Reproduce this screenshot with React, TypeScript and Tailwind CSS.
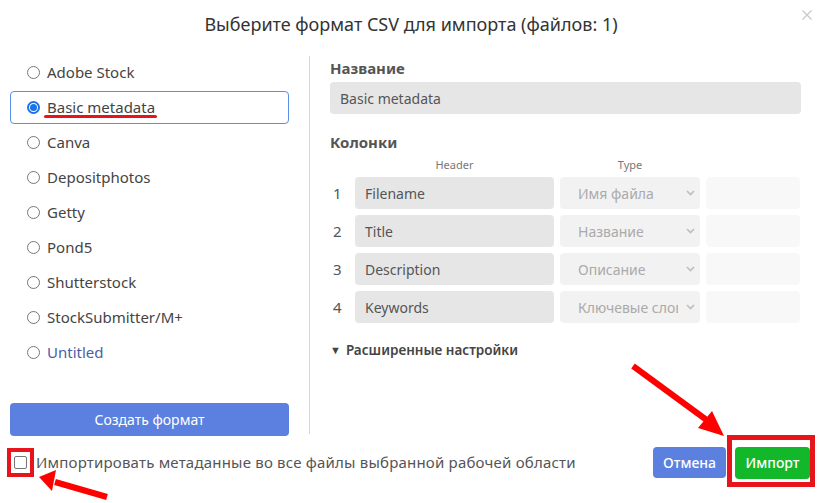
import React from 'react';

const formats = [
  'Adobe Stock',
  'Basic metadata',
  'Canva',
  'Depositphotos',
  'Getty',
  'Pond5',
  'Shutterstock',
  'StockSubmitter/M+',
  'Untitled',
];

const columns = [
  { header: 'Filename', type: 'Имя файла' },
  { header: 'Title', type: 'Название' },
  { header: 'Description', type: 'Описание' },
  { header: 'Keywords', type: 'Ключевые слова' },
];

const Radio: React.FC<{ checked?: boolean }> = ({ checked }) =>
  checked ? (
    <span className="w-[13px] h-[13px] rounded-full border-2 border-[#1a73e8] bg-white flex items-center justify-center shrink-0">
      <span className="w-[7px] h-[7px] rounded-full bg-[#1a73e8]" />
    </span>
  ) : (
    <span className="w-[13px] h-[13px] rounded-full border border-[#767676] bg-white shrink-0" />
  );

const Chevron = () => (
  <svg width="9" height="6" viewBox="0 0 9 6" className="shrink-0">
    <path d="M1 1l3.5 3.5L8 1" fill="none" stroke="#bdbdbd" strokeWidth="1.6" />
  </svg>
);

export default function App() {
  return (
    <div className="relative w-[822px] h-[503px] bg-white overflow-hidden text-[#444] font-['Noto_Sans','Open_Sans',sans-serif]">
      {/* header */}
      <div className="h-[48px] flex items-center justify-center">
        <h1 className="text-[18px] text-[#333]">Выберите формат CSV для импорта (файлов: 1)</h1>
      </div>
      <button className="absolute right-[8px] top-[8px] p-[1px]">
        <svg width="12" height="12" viewBox="0 0 12 12">
          <path d="M1.5 1.5l9 9M10.5 1.5l-9 9" stroke="#c8c8c8" strokeWidth="1.3" />
        </svg>
      </button>

      {/* body */}
      <div className="flex px-[10px] pt-[8px] h-[388px]">
        <div className="w-[279px] flex flex-col">
          <div className="flex flex-col gap-[2px]">
            {formats.map((f, i) => (
              <div
                key={f}
                className={`relative h-[33px] flex items-center gap-[7px] pl-[16px] rounded-[4px] border ${
                  i === 1 ? 'border-[#5b8ee6]' : 'border-transparent'
                }`}
              >
                <Radio checked={i === 1} />
                <span className={`text-[15px] ${f === 'Untitled' ? 'text-[#4a5ea8]' : 'text-[#444]'}`}>{f}</span>
                {i === 1 && (
                  <span className="absolute left-[33px] top-[23px] w-[113px] h-[3px] rounded-full bg-[#e8141c]" />
                )}
              </div>
            ))}
          </div>
          <button className="mt-auto h-[33px] rounded-[4px] bg-[#5b80e0] text-white text-[14px]">
            Создать формат
          </button>
        </div>

        <div className="ml-[20px] w-[1px] mb-[2px] bg-[#d6d6d6]" />

        <div className="pl-[20px] w-[491px] flex flex-col">
          <div className="text-[15px] leading-[24px] font-bold text-[#555]">Название</div>
          <div className="mt-[2px] h-[32px] rounded-[4px] bg-[#e6e6e6] flex items-center px-[10px] text-[14px] text-[#555]">
            Basic metadata
          </div>
          <div className="mt-[16px] text-[15px] leading-[24px] font-bold text-[#555]">Колонки</div>
          <div className="mt-[3px] flex text-[11px] leading-[16px] text-[#777]">
            <div className="w-[25px]" />
            <div className="w-[199px] text-center">Header</div>
            <div className="ml-[6px] w-[140px] text-center">Type</div>
          </div>
          <div className="mt-[4px] flex flex-col gap-[6px]">
            {columns.map((c, i) => (
              <div key={c.header} className="flex h-[32px] items-center">
                <div className="w-[25px] pl-[3px] text-[15px] text-[#555]">{i + 1}</div>
                <div className="w-[199px] h-full rounded-[4px] bg-[#e6e6e6] flex items-center px-[10px] text-[14px] text-[#555]">
                  {c.header}
                </div>
                <div className="ml-[6px] w-[140px] h-full rounded-[4px] bg-[#f2f2f2] flex items-center pl-[18px] pr-[5px] gap-[8px]">
                  <span className="flex-1 overflow-hidden whitespace-nowrap text-[14px] text-[#aaa]">{c.type}</span>
                  <Chevron />
                </div>
                <div className="ml-[6px] w-[94px] h-full rounded-[4px] bg-[#f8f8f8]" />
              </div>
            ))}
          </div>
          <div className="mt-[17px] flex items-center gap-[5px] text-[13.5px] leading-[20px] font-semibold text-[#444]">
            <span className="text-[11px]">▼</span>
            Расширенные настройки
          </div>
        </div>
      </div>

      {/* footer */}
      <div className="flex items-center pl-[14px] pr-[12px] mt-[10px] h-[33px]">
        <span className="w-[13px] h-[13px] rounded-[2px] border border-[#767676] bg-white shrink-0" />
        <span className="ml-[9px] text-[15px] tracking-[0.2px] text-[#555]">
          Импортировать метаданные во все файлы выбранной рабочей области
        </span>
        <div className="ml-auto flex items-center gap-[9px]">
          <button className="h-[31px] w-[73px] rounded-[4px] bg-[#5b80e0] text-white text-[14px] font-medium">
            Отмена
          </button>
          <button className="h-[32px] w-[75px] rounded-[4px] bg-[#12b82a] text-white text-[14px] font-medium">
            Импорт
          </button>
        </div>
      </div>

      {/* red annotations */}
      <div className="absolute left-[7px] top-[448px] w-[27px] h-[29px] border-[4px] border-[#e8141c]" />
      <div className="absolute left-[727px] top-[435px] w-[88px] h-[52px] border-[5px] border-[#e8141c]" />
      <svg className="absolute left-0 top-0 pointer-events-none" width="822" height="503">
        <line x1="633" y1="366" x2="708" y2="421" stroke="#f00" strokeWidth="6" />
        <polygon points="724,436 698,428 712,411" fill="#f00" />
        <line x1="107" y1="497" x2="55" y2="482" stroke="#f00" strokeWidth="6" />
        <polygon points="39,477 56,470 52,491" fill="#f00" />
      </svg>
    </div>
  );
}
